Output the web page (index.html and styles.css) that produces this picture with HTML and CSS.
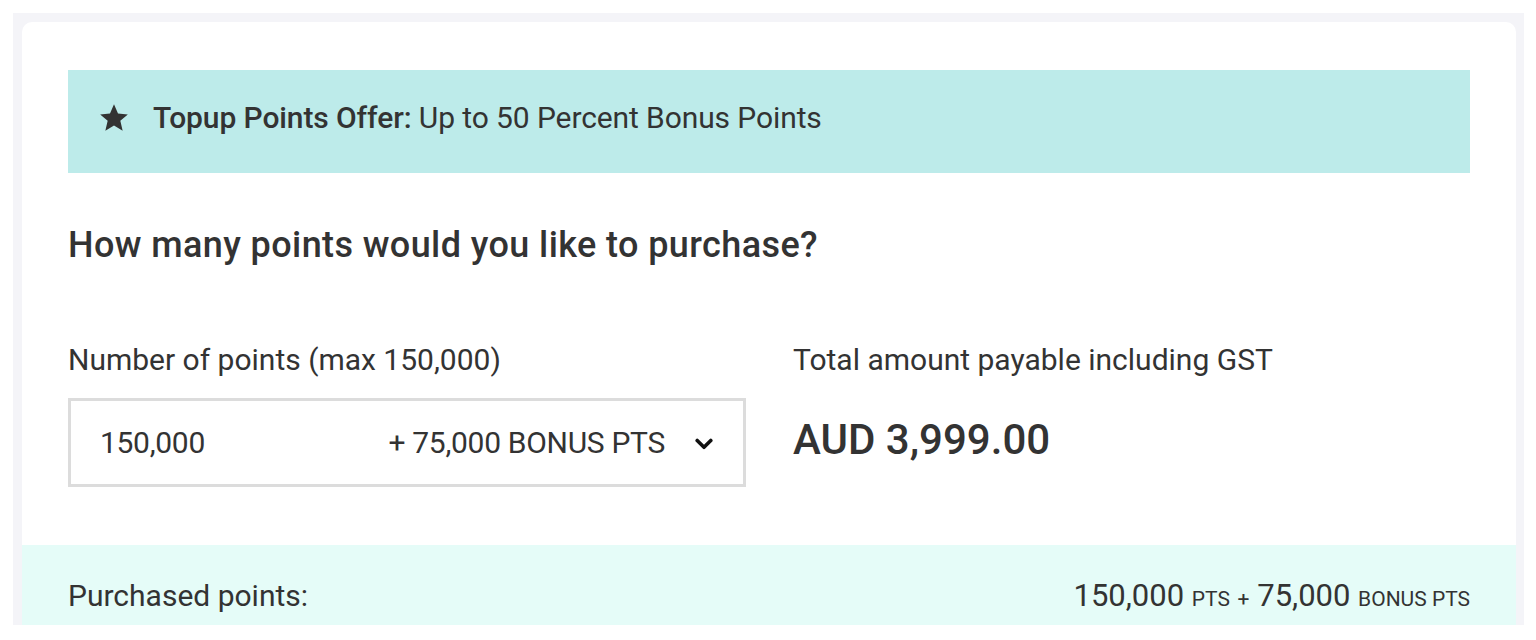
FILE: index.html
```html
<!DOCTYPE html>
<html>
<head>
<meta charset="utf-8">
<link rel="stylesheet" href="styles.css">
</head>
<body>
<div class="frame">
  <div class="card">
    <div class="banner">
      <svg class="star" viewBox="0 0 24 24" width="32" height="31"><path d="M12 1.8l3.1 7.1 7.6.7-5.8 5 1.8 7.6L12 18.2l-6.7 4 1.8-7.6-5.8-5 7.6-.7z" fill="#333"/></svg>
      <span class="offer"><b>Topup Points Offer:</b> Up to 50 Percent Bonus Points</span>
    </div>
    <h2 class="question">How many points would you like to purchase?</h2>
    <div class="form-row">
      <div class="field">
        <div class="label">Number of points (max 150,000)</div>
        <div class="select">
          <span class="sel-value">150,000</span>
          <span class="sel-bonus">+ 75,000 BONUS PTS</span>
          <svg class="chev" viewBox="0 0 18 12" width="18" height="12"><path d="M2.2 2.5l6.8 6.8 6.8-6.8" fill="none" stroke="#111" stroke-width="3.6" stroke-linecap="round" stroke-linejoin="round"/></svg>
        </div>
      </div>
      <div class="field">
        <div class="label">Total amount payable including GST</div>
        <div class="amount">AUD 3,999.00</div>
      </div>
    </div>
    <div class="summary">
      <span class="sum-label">Purchased points:</span>
      <span class="sum-value">150,000 <small>PTS</small> <small>+</small> 75,000 <small>BONUS PTS</small></span>
    </div>
  </div>
</div>
</body>
</html>
```

FILE: styles.css
```css
html, body {
  margin: 0;
  padding: 0;
  background: #ffffff;
}
body {
  font-family: Roboto, "Liberation Sans", sans-serif;
  color: #333333;
}
.frame {
  margin: 13px 12px 0 13px;
  height: 612px;
  background: #f4f4f8;
  padding: 9px 8px 0 9px;
  box-sizing: border-box;
  display: flex;
}
.card {
  flex: 1;
  background: #ffffff;
  border-radius: 10px 10px 0 0;
  padding-top: 48px;
  display: flex;
  flex-direction: column;
  overflow: hidden;
}
.banner {
  margin: 0 46px;
  height: 103px;
  box-sizing: border-box;
  background: #bdebea;
  display: flex;
  align-items: center;
  padding: 0 0 8px 30px;
  gap: 23px;
  font-size: 30px;
  letter-spacing: -0.1px;
}
.offer b {
  font-weight: 500;
}
.question {
  margin: 52px 46px 0;
  font-size: 36px;
  line-height: 40px;
  font-weight: 500;
  letter-spacing: 0.4px;
}
.form-row {
  margin: 77px 46px 0;
  display: grid;
  grid-template-columns: 678px 1fr;
  column-gap: 47px;
}
.label {
  font-size: 30px;
  line-height: 36px;
}
.select {
  margin-top: 20px;
  height: 89px;
  box-sizing: border-box;
  border: 3px solid #dcdcdc;
  display: flex;
  align-items: center;
  padding: 0 30px 0 29px;
  font-size: 30px;
  letter-spacing: -0.3px;
}
.sel-value {
  flex: 1;
}
.sel-bonus {
  margin-right: 30px;
}
.chev {
  margin-top: 2px;
}
.amount {
  margin-top: 37px;
  font-size: 42px;
  font-weight: 500;
  line-height: 50px;
}
.summary {
  margin-top: 58px;
  flex: 1;
  background: #e5fcf8;
  display: flex;
  justify-content: space-between;
  align-items: flex-start;
  padding: 33px 46px 0;
  font-size: 30px;
  line-height: 36px;
}
.sum-value {
  font-size: 31px;
}
.sum-value small {
  font-size: 21px;
}
```
